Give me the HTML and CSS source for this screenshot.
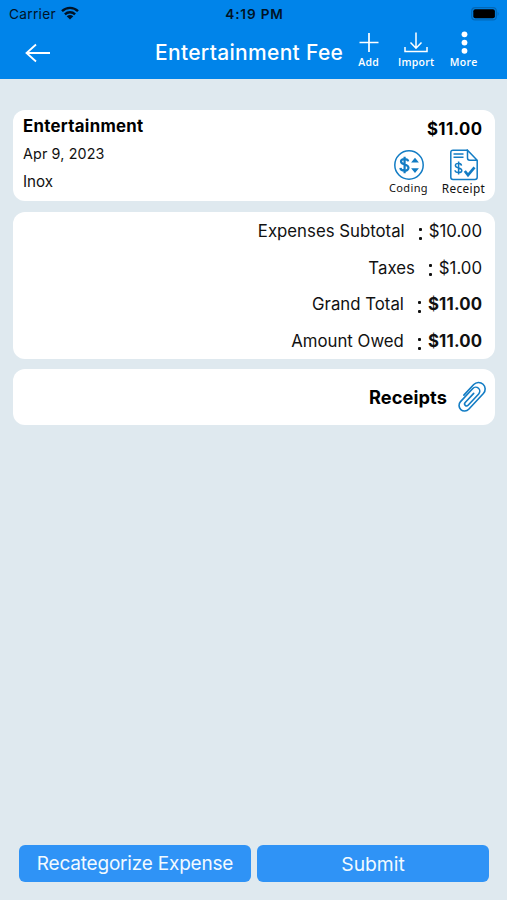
FILE: index.html
```html
<!DOCTYPE html>
<html lang="en">
<head>
<meta charset="utf-8">
<title>Entertainment Fee</title>
<link rel="stylesheet" href="styles.css">
</head>
<body>
<div class="screen">
  <header class="header">
    <div class="status">
      <div class="carrier"><span>Carrier</span>
        <svg class="wifi" width="18" height="14" viewBox="0 0 18 14"><g fill="none" stroke="#001326" stroke-width="2.4"><path d="M1 5.2C5.600.7 12.400.7 17 5.200"/><path d="M3.900 8.300C6.800 5.500 11.200 5.500 14.100 8.300"/></g><path d="M9 13.600L5.700 10.300Q9 7.600 12.300 10.300Z" fill="#001326"/></svg>
      </div>
      <div class="clock">4:19 PM</div>
      <svg class="battery" width="29" height="14" viewBox="0 0 29 14"><rect x=".7" y=".7" width="24.600" height="12.200" rx="3.500" fill="none" stroke="#0368b7" stroke-width="1.200"/><rect x="2.300" y="2.300" width="21.600" height="9" rx="2" fill="#000"/><path d="M26.600 4.500Q28.600 6.800 26.600 9Z" fill="#0368b7"/></svg>
    </div>
    <nav class="nav">
      <svg class="back" width="26" height="20" viewBox="0 0 26 20"><path d="M25 10H2M11 1.500L1.500 10L11 18.500" fill="none" stroke="#fff" stroke-width="1.800"/></svg>
      <h1 class="title">Entertainment Fee</h1>
      <div class="actions">
        <div class="action"><svg width="24" height="24" viewBox="0 0 24 24"><path d="M12 2V21M2.500 11.500H21.500" stroke="#fff" stroke-width="1.700"/></svg><span>Add</span></div>
        <div class="action"><svg width="24" height="24" viewBox="0 0 24 24"><path d="M12 1.500V17M6.500 11.500L12 17.200L17.500 11.500M1 16V20.500H23V16" fill="none" stroke="#fff" stroke-width="1.500"/></svg><span>Import</span></div>
        <div class="action"><svg width="24" height="24" viewBox="0 0 24 24"><g fill="#fff"><circle cx="12.500" cy="3.300" r="2.900"/><circle cx="12.500" cy="11.600" r="2.900"/><circle cx="12.500" cy="19.800" r="2.900"/></g></svg><span>More</span></div>
      </div>
    </nav>
  </header>
  <main class="content">
    <section class="card summary">
      <div class="details">
        <h2 class="category">Entertainment</h2>
        <div class="date">Apr 9, 2023</div>
        <div class="merchant">Inox</div>
      </div>
      <div class="side">
        <div class="amount">$11.00</div>
        <div class="tools">
          <div class="tool coding"><svg width="32" height="32" viewBox="0 0 32 32"><circle cx="16" cy="16" r="14.200" fill="none" stroke="#127cc4" stroke-width="1.500"/><path d="M15.200 12.400C14.700 9.300 8 9.300 8 12.500C8 16.400 15.500 14.700 15.500 18.800C15.500 22.700 7.700 22.500 7.400 18.900M11.600 7.700V24.200" fill="none" stroke="#127cc4" stroke-width="2.200"/><path d="M22 8.700L25.900 13.500H18.100ZM22 24L18.100 19.200H25.900Z" fill="#127cc4"/></svg><span>Coding</span></div>
          <div class="tool receipt"><svg width="32" height="32" viewBox="0 0 32 32"><g fill="none" stroke="#127cc4" stroke-width="1.500"><path d="M19.500 1.200H5Q2.800 1.200 2.800 3.500V28.200Q2.800 30.400 5 30.400H27Q29.200 30.400 29.200 28.200V11.200L19.500 1.200V9Q19.500 11.200 21.700 11.200H29.200M5.500 5H15.500M5.500 8.300H15.500"/><path d="M13.500 16.600C12.800 13.500 7.400 13.800 7.400 16.500C7.400 19.700 13.800 18.200 13.800 21.400C13.800 24.200 7.300 24.400 7 21.200M10.600 12.500V25.600"/><path d="M16.800 22L20 26L26.500 18.300" stroke-width="2.700"/></g></svg><span>Receipt</span></div>
        </div>
      </div>
    </section>
    <section class="card totals">
      <div class="row"><span class="label">Expenses Subtotal</span><i class="colon"></i><span class="value">$10.00</span></div>
      <div class="row"><span class="label">Taxes</span><i class="colon"></i><span class="value">$1.00</span></div>
      <div class="row"><span class="label">Grand Total</span><i class="colon"></i><span class="value strong">$11.00</span></div>
      <div class="row"><span class="label">Amount Owed</span><i class="colon"></i><span class="value strong">$11.00</span></div>
    </section>
    <section class="card receipts">
      <h2 class="receipts-title">Receipts</h2>
      <svg width="30" height="32" viewBox="0 0 30 32"><path transform="translate(14.700 16) rotate(43)" d="M-7 4V-10.500A6.600 6.600 0 0 1 6.200 -10.500V11A5.600 5.600 0 0 1 -5 11V-7A4 4 0 0 1 3 -7V8.500A2 2 0 0 1 -1 8.500V-4" fill="none" stroke="#127cc4" stroke-width="1.600" stroke-linecap="round"/></svg>
    </section>
  </main>
  <footer class="footer">
    <button class="button recategorize">Recategorize Expense</button>
    <button class="button submit">Submit</button>
  </footer>
</div>
</body>
</html>
```
FILE: styles.css
```css
* { box-sizing: border-box; }
body { margin: 0; font-family: Inter, "Liberation Sans", sans-serif; color: #111; }
h1, h2 { margin: 0; }
svg { display: block; flex: none; }
span, h1, h2, button { white-space: nowrap; }
.screen { width: 507px; height: 900px; display: flex; flex-direction: column; background: #dfe9ef; }
.header { height: 79px; background: #0084ea; }
.status { height: 27px; display: grid; grid-template-columns: 1fr 80px 1fr; align-items: center; padding: 0 7px 0 9px; color: #001326; }
.carrier { display: flex; align-items: center; gap: 5px; font-size: 13.7px; letter-spacing: .3px; }
.wifi { margin-top: -2px; }
.clock { font-size: 13.6px; font-weight: 600; letter-spacing: .85px; text-align: center; }
.battery { justify-self: end; }
.nav { height: 52px; display: flex; align-items: center; padding-left: 25px; }
.back { margin-top: -1px; }
.title { width: 190px; margin: -2px 0 0 104px; font-size: 21px; font-weight: 550; letter-spacing: .32px; color: #fff; }
.actions { display: flex; align-self: flex-start; padding-top: 4px; }
.action { width: 47.5px; display: flex; flex-direction: column; align-items: center; color: #fff; font: 600 10.5px/14px "Open Sans", sans-serif; letter-spacing: .3px; }
.content { flex: 1; display: flex; flex-direction: column; padding: 31px 12px 0 13px; }
.card { background: #fff; border-radius: 12px; }
.summary { height: 91px; display: flex; justify-content: space-between; }
.details { padding: 4px 0 0 10px; }
.category { font-size: 16.8px; line-height: 24px; font-weight: 650; letter-spacing: .3px; color: #000; }
.date { font-size: 14.3px; line-height: 27px; margin-top: 2px; letter-spacing: .15px; }
.merchant { font-size: 15.2px; line-height: 28px; margin-top: 1px; }
.side { padding: 6px 5px 0 0; display: flex; flex-direction: column; align-items: flex-end; }
.amount { font-size: 16.8px; font-weight: 650; line-height: 26px; letter-spacing: .4px; margin-right: 7.5px; color: #000; }
.tools { display: flex; margin-top: 7px; }
.tool { width: 55px; display: flex; flex-direction: column; align-items: center; font: 11px/14px "Noto Sans", sans-serif; letter-spacing: .35px; }
.coding { position: relative; left: 1px; }
.receipt { font-size: 11.8px; position: relative; left: 1px; }
.totals { height: 147px; margin-top: 11px; padding: 1px 13px 0 0; }
.row { height: 36.6px; display: flex; align-items: center; justify-content: flex-end; font-size: 16.8px; }
.colon { width: 3px; height: 12px; margin: 5px 7px 0 14px; display: flex; flex-direction: column; justify-content: space-between; }
.colon::before, .colon::after { content: ""; width: 3px; height: 3px; border-radius: 1px; background: #111; }
.strong { font-weight: 650; letter-spacing: .2px; margin-right: -.3px; }
.receipts { height: 56px; margin-top: 10px; padding-right: 8px; display: flex; align-items: center; justify-content: flex-end; gap: 10px; }
.receipts-title { font-size: 18.2px; font-weight: 650; letter-spacing: .1px; color: #000; }
.footer { display: flex; gap: 6px; padding: 0 18px 18px 19px; }
.button { flex: 1; height: 37px; padding: 0; border: 0; border-radius: 6px; background: #2f93f6; color: #f2faff; font: 400 19.3px Inter, sans-serif; }
.recategorize { font-size: 19px; letter-spacing: -.2px; }
```
